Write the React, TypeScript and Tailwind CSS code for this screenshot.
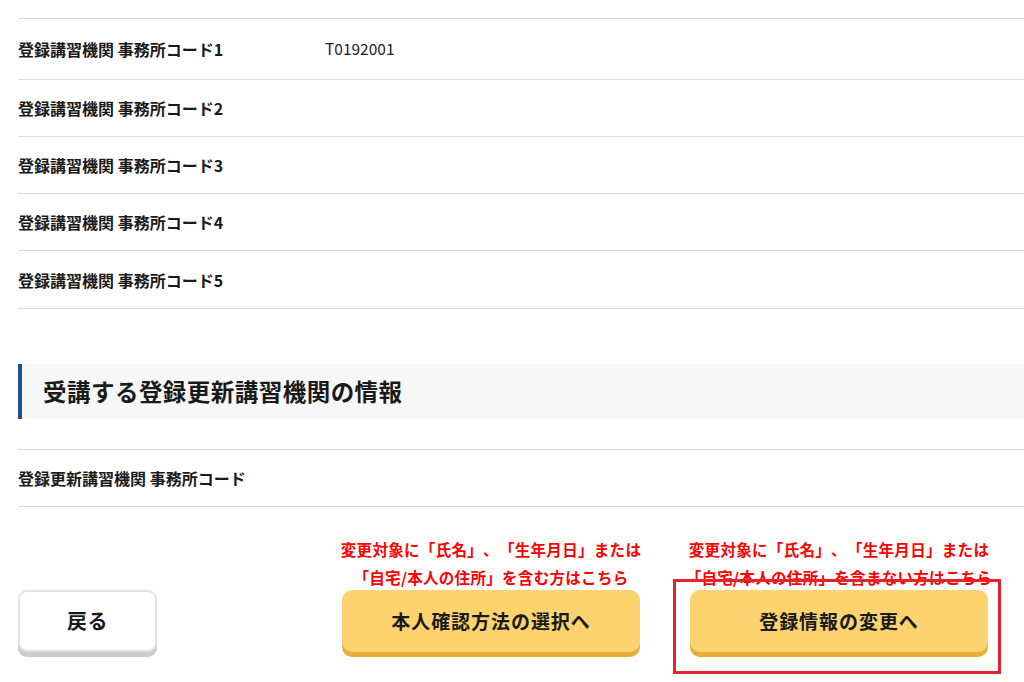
import React from "react";

const rows = [
  { label: "登録講習機関 事務所コード1", value: "T0192001", h: "h-[61px]" },
  { label: "登録講習機関 事務所コード2", value: "", h: "h-[57px]" },
  { label: "登録講習機関 事務所コード3", value: "", h: "h-[57px]" },
  { label: "登録講習機関 事務所コード4", value: "", h: "h-[57px]" },
  { label: "登録講習機関 事務所コード5", value: "", h: "h-[58px]" },
];

export default function App() {
  return (
    <div
      className="w-[1024px] h-[682px] overflow-hidden bg-white text-[#1a1a1a] relative [text-spacing-trim:space-all]"
      style={{ fontFamily: '"Noto Sans CJK JP", "Noto Sans", sans-serif' }}
    >
      <div className="pl-[18px] pt-[18px]">
        <div className="border-t border-[#dddddd]">
          {rows.map((r) => (
            <div key={r.label} className={`flex items-center border-b border-[#dddddd] ${r.h}`}>
              <div className="w-[307px] text-[16px] font-bold leading-none">{r.label}</div>
              <div className="text-[15.5px] leading-none text-[#222]">{r.value}</div>
            </div>
          ))}
        </div>

        <div className="mt-[55px] h-[55px] bg-[#f7f7f7] border-l-[4px] border-[#1d4f91] flex items-center pl-[21px]">
          <h2 className="text-[23.5px] font-bold leading-none tracking-[0.02em]">受講する登録更新講習機関の情報</h2>
        </div>

        <div className="mt-[30px] border-t border-[#dddddd]">
          <div className="flex items-center border-b border-[#dddddd] h-[57px]">
            <div className="text-[16px] font-bold leading-none">登録更新講習機関 事務所コード</div>
          </div>
        </div>

        <div className="mt-[28px] flex items-end relative">
          <button className="w-[139px] h-[62px] rounded-[9px] bg-white border-2 border-[#e2e2e2] shadow-[0_5px_0_#cccccc] text-[20px] font-bold tracking-[0.02em] text-[#1a1a1a] mb-[5px]">
            戻る
          </button>
          <div className="ml-[185px] w-[298px] flex flex-col items-center">
            <div className="text-[#ff0000] text-[15.5px] font-bold leading-[28px] whitespace-nowrap text-center tracking-[0.02em]">
              <div>変更対象に「氏名」、「生年月日」または</div>
              <div>「自宅/本人の住所」を含む方はこちら</div>
            </div>
            <button className="-mt-[1px] w-[298px] h-[62px] rounded-[10px] bg-[#fdd36f] shadow-[0_5px_0_#e6ad38] text-[19px] font-bold tracking-[0.05em] text-[#1a1a1a] mb-[5px]">
              本人確認方法の選択へ
            </button>
          </div>
          <div className="ml-[50px] w-[298px] flex flex-col items-center">
            <div className="text-[#ff0000] text-[15.5px] font-bold leading-[28px] whitespace-nowrap text-center tracking-[0.02em]">
              <div>変更対象に「氏名」、「生年月日」または</div>
              <div>「自宅/本人の住所」を含まない方はこちら</div>
            </div>
            <button className="-mt-[1px] w-[298px] h-[62px] rounded-[10px] bg-[#fdd36f] shadow-[0_5px_0_#e6ad38] text-[19px] font-bold tracking-[0.05em] text-[#1a1a1a] mb-[5px]">
              登録情報の変更へ
            </button>
          </div>
        </div>
      </div>
      <div className="absolute left-[673px] top-[579px] w-[328px] h-[95px] border-[3px] border-[#e8222c] pointer-events-none" />
    </div>
  );
}
